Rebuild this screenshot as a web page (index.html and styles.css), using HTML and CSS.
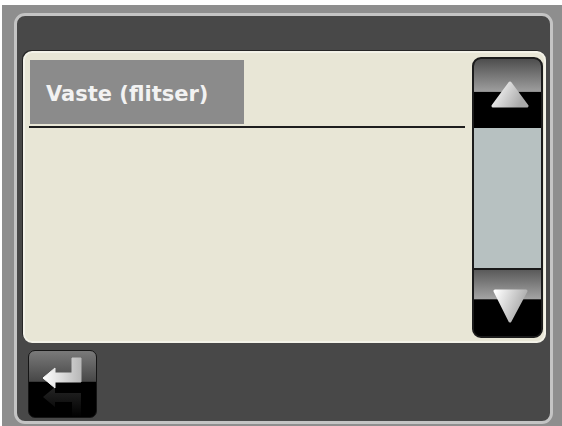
FILE: index.html
```html
<!DOCTYPE html>
<html>
<head>
<meta charset="utf-8">
<link rel="stylesheet" href="styles.css">
</head>
<body>
<div class="frame">
  <div class="panel">
    <div class="cream">
      <div class="list">
        <div class="row">Vaste (flitser)</div>
        <div class="rule"></div>
      </div>
      <div class="scroll">
        <div class="sbtn up">
          <svg width="67" height="69" viewBox="0 0 67 69">
            <defs>
              <linearGradient id="gu" x1="0" y1="0" x2="1" y2="0.4">
                <stop offset="0" stop-color="#ffffff"/>
                <stop offset="1" stop-color="#a9a9a9"/>
              </linearGradient>
            </defs>
            <polygon points="36,24 53,47 19,47" fill="url(#gu)" stroke="url(#gu)" stroke-width="3" stroke-linejoin="round"/>
          </svg>
        </div>
        <div class="track"></div>
        <div class="divider"></div>
        <div class="sbtn down">
          <svg width="67" height="66" viewBox="0 0 67 66">
            <defs>
              <linearGradient id="gd" x1="0" y1="0" x2="1" y2="0.4">
                <stop offset="0" stop-color="#ffffff"/>
                <stop offset="1" stop-color="#a9a9a9"/>
              </linearGradient>
            </defs>
            <polygon points="21,21 52,21 36,51" fill="url(#gd)" stroke="url(#gd)" stroke-width="3" stroke-linejoin="round"/>
          </svg>
        </div>
      </div>
    </div>
    <div class="bottom">
      <div class="btn">
        <svg width="67" height="66" viewBox="0 0 67 66">
          <defs>
            <linearGradient id="ga" x1="0" y1="0" x2="1" y2="0">
              <stop offset="0" stop-color="#ffffff"/>
              <stop offset="1" stop-color="#b8b8b8"/>
            </linearGradient>
            <linearGradient id="gr" x1="0" y1="0" x2="0" y2="1">
              <stop offset="0" stop-color="#000000"/>
              <stop offset="1" stop-color="#4a4a4a"/>
            </linearGradient>
          </defs>
          <g transform="translate(0,73) scale(1,-1)" opacity="0.5">
            <polygon points="43,7 52,7 52,31 26,31 26,37 14,27 26,17 26,22 43,22" fill="url(#gr)"/>
          </g>
          <polygon points="43,7 52,7 52,31 26,31 26,37 14,27 26,17 26,22 43,22" fill="url(#ga)" stroke="url(#ga)" stroke-width="1" stroke-linejoin="round"/>
        </svg>
      </div>
    </div>
  </div>
</div>
</body>
</html>
```

FILE: styles.css
```css
html, body {
  margin: 0;
  padding: 0;
}
body {
  width: 562px;
  height: 426px;
  background: #ffffff;
  overflow: hidden;
}
.frame {
  margin: 5px 0 0 2px;
  width: 560px;
  height: 421px;
  box-sizing: border-box;
  padding: 8px 9px 2px 12px;
  background: #8e8e8e;
}
.panel {
  height: 100%;
  box-sizing: border-box;
  border: 3px solid #c4c4c4;
  border-radius: 11px;
  background: #484848;
  padding: 35px 4px 3px 6px;
  display: flex;
  flex-direction: column;
}
.cream {
  height: 292px;
  box-sizing: border-box;
  border: 2px solid #f3f2e8;
  border-radius: 9px;
  background: #e8e6d6;
  box-shadow: -1px -1px 0 #262626;
  display: flex;
}
.list {
  flex: 1;
  padding: 7px 0 0 4px;
}
.row {
  margin-left: 1px;
  width: 214px;
  height: 64px;
  box-sizing: border-box;
  background: #8b8b8b;
  color: #f2f2f2;
  font-family: "DejaVu Sans", sans-serif;
  font-weight: bold;
  font-size: 21px;
  padding: 4px 0 0 16px;
  line-height: 60px;
  white-space: nowrap;
}
.rule {
  margin-top: 2px;
  height: 2px;
  background: #1e1e1e;
}
.scroll {
  width: 71px;
  margin: 4px 1px 3px 7px;
  box-sizing: border-box;
  border: 2px solid #1c1c1c;
  border-radius: 9px;
  overflow: hidden;
  display: flex;
  flex-direction: column;
  background: #000;
}
.sbtn svg {
  display: block;
}
.up {
  height: 69px;
  background: linear-gradient(180deg, #4e4e4e 0%, #9e9e9e 47%, #000 48%, #000 100%);
}
.track {
  height: 140px;
  background: #b7c1c1;
}
.divider {
  height: 2px;
  background: #1a1a1a;
}
.down {
  height: 66px;
  background: linear-gradient(180deg, #5a5a5a 0%, #a4a4a4 44%, #000 45%, #000 100%);
}
.bottom {
  margin-top: 7px;
  display: flex;
}
.btn {
  margin-left: 5px;
  width: 69px;
  height: 68px;
  box-sizing: border-box;
  border: 1px solid #151515;
  border-radius: 7px;
  overflow: hidden;
  background: linear-gradient(180deg, #7a7a7a 0%, #474747 46%, #000 47%, #000 100%);
}
.btn svg {
  display: block;
}
```
